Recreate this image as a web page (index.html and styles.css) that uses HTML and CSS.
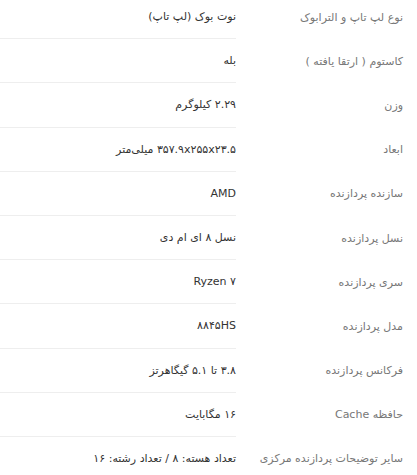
FILE: index.html
```html
<!DOCTYPE html>
<html lang="fa" dir="rtl">
<head>
<meta charset="utf-8">
<link rel="stylesheet" href="styles.css">
</head>
<body>
<div class="specs">
  <div class="row"><div class="label">نوع لپ تاپ و الترابوک</div><div class="value">نوت بوک (لپ تاپ)</div></div>
  <div class="row"><div class="label">کاستوم ( ارتقا یافته )</div><div class="value">بله</div></div>
  <div class="row"><div class="label">وزن</div><div class="value">۲.۲۹ کیلوگرم</div></div>
  <div class="row"><div class="label">ابعاد</div><div class="value">۳۵۷.۹x۲۵۵x۲۳.۵ میلی‌متر</div></div>
  <div class="row"><div class="label">سازنده پردازنده</div><div class="value">AMD</div></div>
  <div class="row"><div class="label">نسل پردازنده</div><div class="value">نسل ۸ ای ام دی</div></div>
  <div class="row"><div class="label">سری پردازنده</div><div class="value">Ryzen ۷</div></div>
  <div class="row"><div class="label">مدل پردازنده</div><div class="value">۸۸۴۵HS</div></div>
  <div class="row"><div class="label">فرکانس پردازنده</div><div class="value">۳.۸ تا ۵.۱ گیگاهرتز</div></div>
  <div class="row"><div class="label">حافظه Cache</div><div class="value">۱۶ مگابایت</div></div>
  <div class="row"><div class="label">سایر توضیحات پردازنده مرکزی</div><div class="value">تعداد هسته: ۸ / تعداد رشته: ۱۶</div></div>
</div>
</body>
</html>
```
FILE: styles.css
```css
html, body {
  margin: 0;
  padding: 0;
  background: #fff;
}
body {
  font-family: "DejaVu Sans", sans-serif;
  font-size: 11px;
  direction: rtl;
}
.specs {
  display: flex;
  flex-direction: column;
  margin-top: -5px;
}
.row {
  display: flex;
  height: 44.2px;
}
.label {
  width: 167px;
  padding-right: 14px;
  color: #777;
  display: flex;
  align-items: center;
}
.value {
  width: 236px;
  color: #333;
  display: flex;
  align-items: center;
  border-bottom: 1px solid #eee;
  box-sizing: border-box;
}
.row:last-child .value {
  border-bottom: none;
}
```
